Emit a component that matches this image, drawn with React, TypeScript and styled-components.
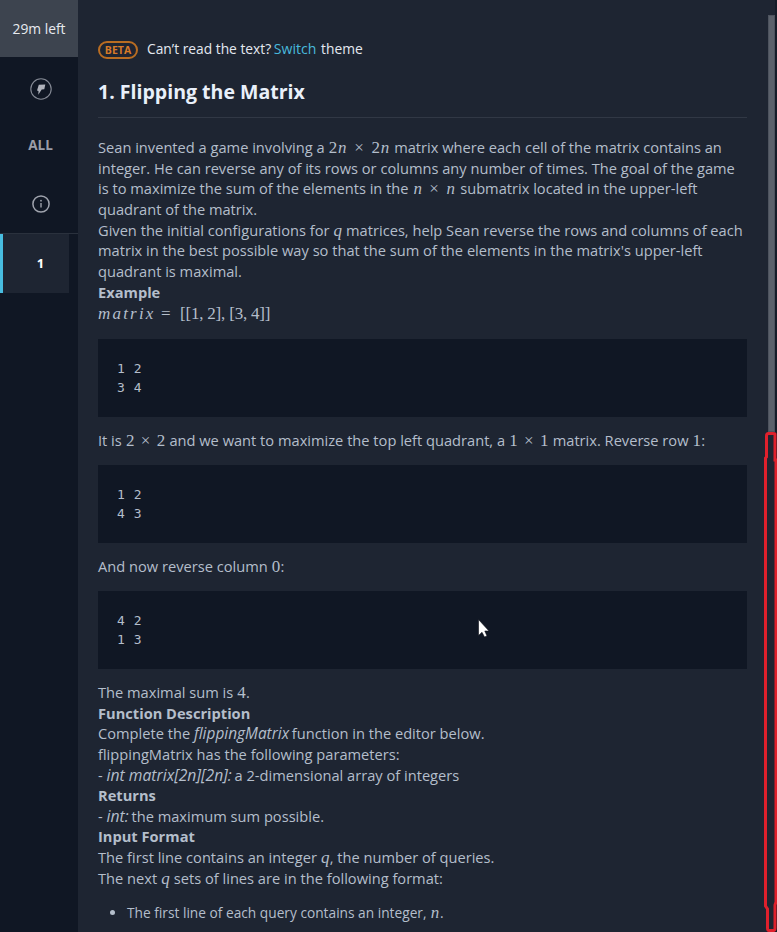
import React from "react";
import styled, { createGlobalStyle } from "styled-components";

const GlobalStyle = createGlobalStyle`
  *, *::before, *::after { box-sizing: border-box; }
  html, body { margin: 0; padding: 0; background: #1e2532; }
  body { font-family: "Open Sans", "Noto Sans", sans-serif; overflow: hidden; }
`;

const Page = styled.div`
  position: relative;
  display: flex;
  width: 777px;
  height: 932px;
  overflow: hidden;
  background: #1e2532;
  color: #b4becb;
`;

const Sidebar = styled.nav`
  display: flex;
  flex-direction: column;
  flex: 0 0 78px;
  background: #101724;
`;

const Timer = styled.div`
  height: 57px;
  display: flex;
  align-items: center;
  justify-content: center;
  background: #3d444f;
  color: #e8ebef;
  font-size: 13.8px;
`;

const NavItem = styled.div<{ $height: number; $drop?: number }>`
  height: ${(p) => p.$height}px;
  padding: ${(p) => p.$drop ?? 0}px 0 0 3px;
  display: flex;
  align-items: center;
  justify-content: center;
  color: #9a9da8;
  font-size: 13.5px;
  font-weight: 700;
`;

const ActiveRow = styled.div`
  border-top: 1px solid #2a313d;
`;

const ActiveItem = styled.div`
  width: 69px;
  height: 59px;
  padding: 0 0 2px 9px;
  display: flex;
  align-items: center;
  justify-content: center;
  border-left: 3px solid #48bde0;
  background: #1e2532;
  color: #fff;
  font-size: 13px;
  font-weight: 700;
`;

const Content = styled.main`
  flex: 0 0 649px;
  margin-left: 20px;
  padding-top: 38px;
`;

const Notice = styled.div`
  display: flex;
  align-items: center;
  height: 20px;
  gap: 9px;
  color: #e4e9f0;
  font-size: 13.8px;
  white-space: nowrap;
`;

const Beta = styled.span`
  display: flex;
  align-items: center;
  justify-content: center;
  width: 40px;
  height: 18px;
  margin-top: 4px;
  border: 2px solid #b96d22;
  border-radius: 9px;
  color: #d77a28;
  font-size: 10.5px;
  font-weight: 700;
  line-height: 14px;
`;

const Switch = styled.span`
  margin: 0 1px 0 -1px;
  color: #48b9dc;
  font-size: 14.1px;
`;

const Title = styled.h1`
  height: 60px;
  margin: 0 0 19px;
  padding-top: 20px;
  border-bottom: 1px solid #313845;
  color: #e9f0fa;
  font-size: 19.55px;
  line-height: 28px;
  font-weight: 700;
  white-space: nowrap;
`;

const Para = styled.div<{ $top?: number; $pitch?: number }>`
  --pitch: ${(p) => p.$pitch ?? 20.6}px;
  padding-top: ${(p) => p.$top ?? 0}px;
`;

const Line = styled.div`
  height: var(--pitch, 20.6px);
  line-height: var(--pitch, 20.6px);
  font-size: 14.65px;
  white-space: pre;
`;

const Bold = styled.strong`
  font-weight: 700;
`;

const Term = styled.em<{ $size?: number }>`
  margin-right: -1px;
  font-size: ${(p) => p.$size ?? 15.4}px;
  line-height: 1;
`;

const Math = styled.span<{ $w: number; $italic?: boolean; $track?: number; $gap?: number; $left?: boolean }>`
  display: inline-block;
  width: ${(p) => p.$w}px;
  line-height: 18px;
  font-family: "Liberation Serif", serif;
  font-size: 17px;
  font-style: ${(p) => (p.$italic ? "italic" : "normal")};
  letter-spacing: ${(p) => p.$track ?? 0}px;
  word-spacing: ${(p) => p.$gap ?? 0}px;
  text-align: ${(p) => (p.$left ? "left" : "center")};
  white-space: pre;
`;

const Code = styled.pre<{ $top: number }>`
  height: 78px;
  margin: ${(p) => p.$top}px 0 0;
  padding: 20px 19px;
  background: #101724;
  font-family: "DejaVu Sans Mono", monospace;
  font-size: 13px;
  letter-spacing: 0.5px;
  line-height: 19.6px;
`;

const List = styled.ul`
  margin: 14.5px 0 0;
  padding: 0;
`;

const Bullet = styled.li`
  display: flex;
  align-items: center;
  gap: 12px;
  padding-left: 12px;
  list-style: none;

  &::before {
    content: "";
    width: 5px;
    height: 5px;
    border-radius: 50%;
    background: #b4becb;
  }
`;

const BulletLine = styled(Line)`
  font-size: 13.72px;
`;

const ScrollRail = styled.div`
  flex: 0 0 9px;
  margin-left: auto;
  padding-top: 15px;
  border-right: 2px solid #151c28;
`;

const ScrollThumb = styled.div`
  width: 7px;
  height: 417px;
  border: 1px solid #4d535e;
  background: #5b616b;
`;

const Overlay = styled.svg`
  position: absolute;
  top: 0;
  left: 0;
  pointer-events: none;
`;

const CompassIcon = () => (
  <svg width="22" height="22" viewBox="0 0 22 22">
    <circle cx="11" cy="11" r="10.2" fill="none" stroke="#868b96" strokeWidth="1.1" />
    <path d="M8.800 6.800 15.300 6.600 14.300 11.200 11.700 11.500 8.300 16.800 8.500 13 7 12.600Z" fill="#b0b3bc" />
  </svg>
);

const InfoIcon = () => (
  <svg width="18" height="18" viewBox="0 0 18 18">
    <circle cx="9" cy="9" r="8.1" fill="none" stroke="#9fa3ad" strokeWidth="1.5" />
    <path d="M9 8v4.500" stroke="#9fa3ad" strokeWidth="1.4" />
    <circle cx="9" cy="5.700" r="0.900" fill="#9fa3ad" />
  </svg>
);

export default function App() {
  return (
    <Page>
      <GlobalStyle />
      <Sidebar>
        <Timer>29m left</Timer>
        <NavItem $height={62} $drop={2}><CompassIcon /></NavItem>
        <NavItem $height={52}>ALL</NavItem>
        <NavItem $height={62} $drop={4}><InfoIcon /></NavItem>
        <ActiveRow><ActiveItem>1</ActiveItem></ActiveRow>
      </Sidebar>
      <Content>
        <Notice>
          <Beta>BETA</Beta>
          <span>Can’t read the text? <Switch>Switch</Switch> theme</span>
        </Notice>
        <Title>1. Flipping the Matrix</Title>
        <Para $pitch={20.7}>
          <Line>Sean invented a game involving a <Math $w={62} $track={0.7} $gap={2}>2<i>n</i> × 2<i>n</i></Math> matrix where each cell of the matrix contains an</Line>
          <Line>integer. He can reverse any of its rows or columns any number of times. The goal of the game</Line>
          <Line>is to maximize the sum of the elements in the <Math $w={44} $track={0.5} $gap={2.2}><i>n</i> × <i>n</i></Math> submatrix located in the upper-left</Line>
          <Line>quadrant of the matrix.</Line>
          <Line>Given the initial configurations for <Math $w={9} $italic>q</Math> matrices, help Sean reverse the rows and columns of each</Line>
          <Line>matrix in the best possible way so that the sum of the elements in the matrix's upper-left</Line>
          <Line>quadrant is maximal.</Line>
          <Line><Bold>Example</Bold></Line>
          <Line><Math $w={63} $italic $left $track={2.2}>matrix</Math><Math $w={19} $left>=</Math><Math $w={92} $left $track={-0.2}>[[1, 2], [3, 4]]</Math></Line>
        </Para>
        <Code $top={15.7}>{"1 2\n3 4"}</Code>
        <Para $top={13.2}>
          <Line>It is <Math $w={40} $gap={2}>2 × 2</Math> and we want to maximize the top left quadrant, a <Math $w={40} $gap={2}>1 × 1</Math> matrix. Reverse row <Math $w={9}>1</Math>:</Line>
        </Para>
        <Code $top={14.2}>{"1 2\n4 3"}</Code>
        <Para $top={13.2}>
          <Line>And now reverse column <Math $w={9}>0</Math>:</Line>
        </Para>
        <Code $top={14.2}>{"4 2\n1 3"}</Code>
        <Para $top={13.4}>
          <Line>The maximal sum is <Math $w={9}>4</Math>.</Line>
          <Line><Bold>Function Description</Bold></Line>
          <Line>Complete the <Term>flippingMatrix</Term> function in the editor below.</Line>
          <Line>flippingMatrix has the following parameters:</Line>
          <Line>- <Term $size={15.7}>int matrix[2n][2n]:</Term> a 2-dimensional array of integers</Line>
          <Line><Bold>Returns</Bold></Line>
          <Line>- <Term $size={15.7}>int:</Term> the maximum sum possible.</Line>
          <Line><Bold>Input Format</Bold></Line>
          <Line>The first line contains an integer <Math $w={9} $italic>q</Math>, the number of queries.</Line>
          <Line>The next <Math $w={9} $italic>q</Math> sets of lines are in the following format:</Line>
        </Para>
        <List>
          <Bullet><BulletLine>The first line of each query contains an integer, <Math $w={10} $italic>n</Math>.</BulletLine></Bullet>
        </List>
      </Content>
      <ScrollRail><ScrollThumb /></ScrollRail>
      <Overlay width="777" height="932" viewBox="0 0 777 932">
        <path d="M775 460V434Q775 433.500 773 433.500H768.500Q766.500 433.500 766.500 436V457L765.500 458V906L767.500 909V928Q767.500 930.500 769 930.500H773.500Q775 930.500 775 928V905L776 902V460Z" fill="none" stroke="#e0202c" strokeWidth="3" />
        <path d="M478.500 619.500V635.500L482 632.300 484.500 637 487 636 484.800 631H489Z" fill="#fff" stroke="#0b0f17" strokeWidth="0.6" />
      </Overlay>
    </Page>
  );
}
